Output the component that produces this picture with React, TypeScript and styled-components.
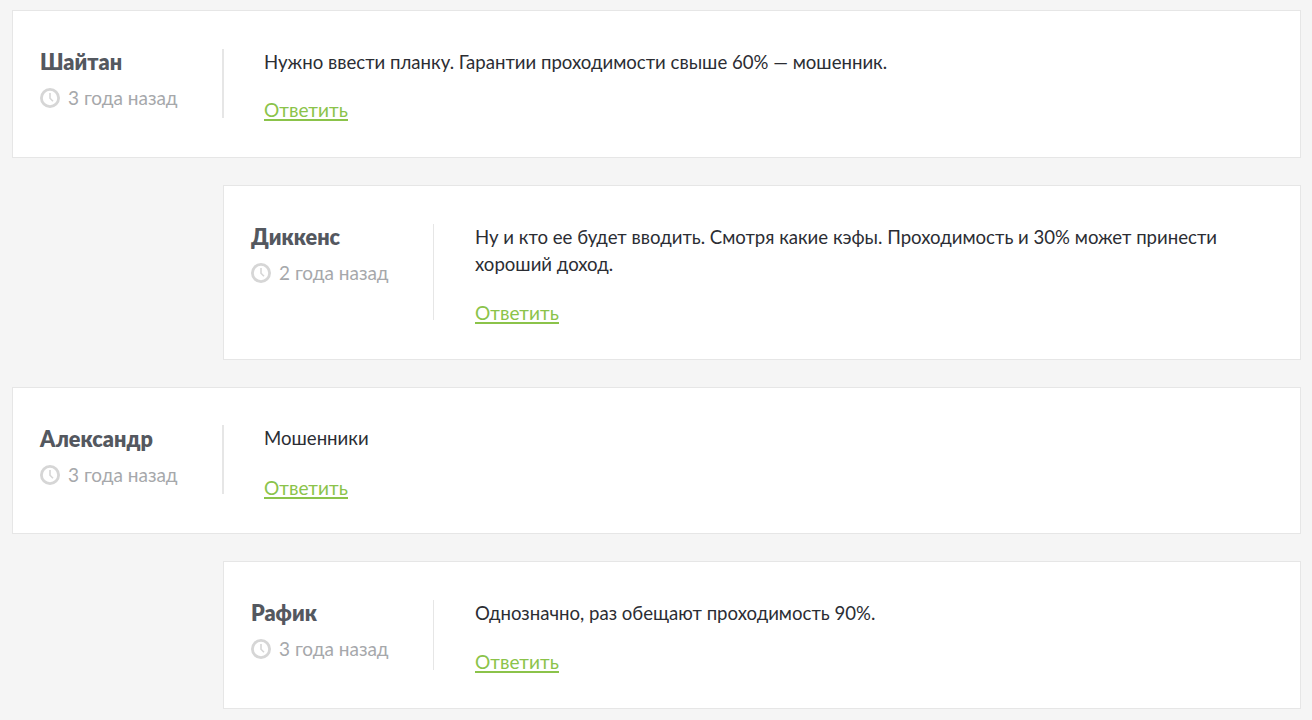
import React from "react";
import styled, { createGlobalStyle } from "styled-components";

const Global = createGlobalStyle`
  html, body { margin: 0; padding: 0; background: #f5f5f5; }
  body { font-family: "Lato", "Inter", sans-serif; }
`;

const Page = styled.main`
  display: flex;
  flex-direction: column;
  gap: 27px;
  padding: 10px 11px 0 12px;
`;

const Card = styled.article<{ $nested?: boolean; $height: number; $top: number }>`
  display: flex;
  box-sizing: border-box;
  height: ${(p) => p.$height}px;
  margin-left: ${(p) => (p.$nested ? 211 : 0)}px;
  padding: ${(p) => p.$top}px 27px 0;
  background: #fff;
  border: 1px solid #e6e6e6;
`;

const Author = styled.div<{ $thick?: boolean; $rule: number; $inset: number }>`
  box-sizing: border-box;
  flex: 0 0 ${(p) => (p.$thick ? 184 : 183)}px;
  height: ${(p) => p.$rule}px;
  padding-top: ${(p) => p.$inset}px;
  border-right: ${(p) => (p.$thick ? 2 : 1)}px solid #e6e6e6;
`;

const Name = styled.div`
  font-size: 21.6px;
  line-height: 27px;
  font-weight: 800;
  color: #54585f;
`;

const When = styled.div`
  display: flex;
  align-items: center;
  gap: 8px;
  margin-top: 9px;
  font-size: 19px;
  line-height: 26px;
  color: #a6a8ab;
`;

const Body = styled.div<{ $thick?: boolean }>`
  padding-left: ${(p) => (p.$thick ? 40 : 41)}px;
  min-width: 0;
`;

const Text = styled.p`
  margin: 0;
  font-size: 18.6px;
  line-height: 27px;
  color: #2b2d33;
`;

const Reply = styled.a<{ $gap: number }>`
  display: inline-block;
  margin-top: ${(p) => p.$gap}px;
  font-size: 19.1px;
  line-height: 19px;
  color: #8bc34a;
  border-bottom: 2px solid #8bc34a;
`;

const ClockIcon = () => (
  <svg width="20" height="20" viewBox="0 0 20 20" fill="none" stroke="#d6d6d6">
    <circle cx="10" cy="10" r="8.6" strokeWidth="2.8" />
    <path d="M10 5v5.2l3 3" strokeWidth="1.6" />
  </svg>
);

const items = [
  { name: "Шайтан", when: "3 года назад", text: "Нужно ввести планку. Гарантии проходимости свыше 60% — мошенник.", height: 148, rule: 69, top: 38, gap: 24, inset: 0, thick: true },
  { name: "Диккенс", when: "2 года назад", text: "Ну и кто ее будет вводить. Смотря какие кэфы. Проходимость и 30% может принести хороший доход.", nested: true, height: 175, rule: 96, top: 38, gap: 25, inset: 0 },
  { name: "Александр", when: "3 года назад", text: "Мошенники", height: 147, rule: 69, top: 37, gap: 26, inset: 1, thick: true },
  { name: "Рафик", when: "3 года назад", text: "Однозначно, раз обещают проходимость 90%.", nested: true, height: 148, rule: 70, top: 38, gap: 25, inset: 0 },
];

export default function App() {
  return (
    <>
      <Global />
      <Page>
        {items.map((c) => (
          <Card key={c.name} $nested={c.nested} $height={c.height} $top={c.top}>
            <Author $thick={c.thick} $rule={c.rule} $inset={c.inset}>
              <Name>{c.name}</Name>
              <When>
                <ClockIcon />
                {c.when}
              </When>
            </Author>
            <Body $thick={c.thick}>
              <Text>{c.text}</Text>
              <Reply $gap={c.gap}>Ответить</Reply>
            </Body>
          </Card>
        ))}
      </Page>
    </>
  );
}
